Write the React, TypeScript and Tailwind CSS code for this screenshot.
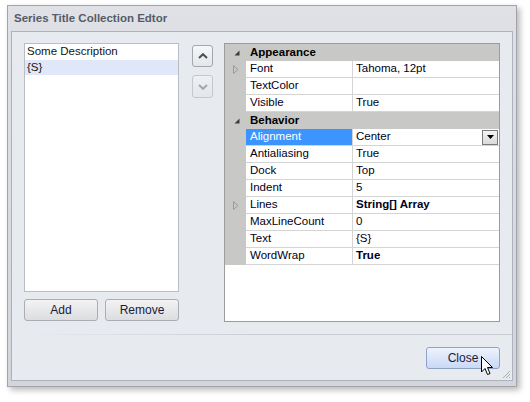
import React from 'react';

type Row =
    | { kind: 'cat'; label: string }
    | { kind: 'prop'; name: string; value: string; bold?: boolean; expand?: boolean; selected?: boolean };

const rows: Row[] = [
    { kind: 'cat', label: 'Appearance' },
    { kind: 'prop', name: 'Font', value: 'Tahoma, 12pt', expand: true },
    { kind: 'prop', name: 'TextColor', value: '' },
    { kind: 'prop', name: 'Visible', value: 'True' },
    { kind: 'cat', label: 'Behavior' },
    { kind: 'prop', name: 'Alignment', value: 'Center', selected: true },
    { kind: 'prop', name: 'Antialiasing', value: 'True' },
    { kind: 'prop', name: 'Dock', value: 'Top' },
    { kind: 'prop', name: 'Indent', value: '5' },
    { kind: 'prop', name: 'Lines', value: 'String[] Array', bold: true, expand: true },
    { kind: 'prop', name: 'MaxLineCount', value: '0' },
    { kind: 'prop', name: 'Text', value: '{S}' },
    { kind: 'prop', name: 'WordWrap', value: 'True', bold: true },
];

const Collapse = () => (
    <svg width="6" height="6" viewBox="0 0 6 6">
        <polygon points="5.5,0.5 5.5,5.5 0.5,5.5" fill="#3c3c3c" />
    </svg>
);

const Expand = () => (
    <svg width="6" height="9" viewBox="0 0 6 9">
        <polygon points="0.5,0.5 5,4.5 0.5,8.5" fill="none" stroke="#9a9a9a" strokeWidth="1" />
    </svg>
);

const Chevron = ({ up, color }: { up?: boolean; color: string }) => (
    <svg width="10" height="6" viewBox="0 0 10 6">
        <polyline
            points={up ? '1,5 5,1.2 9,5' : '1,1 5,4.8 9,1'}
            fill="none"
            stroke={color}
            strokeWidth="2"
        />
    </svg>
);

const Cursor = () => (
    <svg width="13" height="20" viewBox="0 0 13 20" className="absolute left-[481px] top-[356px]">
        <path
            d="M0.5,0.5 L0.5,16 L4,12.5 L6.5,18.5 L9,17.5 L6.5,11.5 L11.5,11.5 Z"
            fill="#ffffff"
            stroke="#000000"
            strokeWidth="1"
            strokeLinejoin="round"
        />
    </svg>
);

const PropertyGrid = () => (
    <div className="w-[276px] h-[279px] border border-[#9c9c9c] bg-white flex flex-col">
        {rows.map((r, i) =>
            r.kind === 'cat' ? (
                <div key={i} className="h-[17px] shrink-0 flex items-center bg-[#c8c9c6]">
                    <div className="w-[21px] flex items-center justify-center pl-[3px]">
                        <Collapse />
                    </div>
                    <span className="pl-[4px] font-bold text-black">{r.label}</span>
                </div>
            ) : (
                <div key={i} className="h-[17px] shrink-0 flex">
                    <div className="w-[21px] bg-[#c8c9c6] flex items-center justify-center pl-[1px]">
                        {r.expand && <Expand />}
                    </div>
                    <div
                        className={
                            r.selected
                                ? 'w-[107px] border-r border-b border-[#d4d4d4] bg-[#3c95fe] text-white pl-[4px] flex items-center'
                                : 'w-[107px] border-r border-b border-[#d4d4d4] text-[#000020] pl-[4px] flex items-center'
                        }
                    >
                        {r.name}
                    </div>
                    <div className="flex-1 border-b border-[#d4d4d4] pl-[3px] flex items-center justify-between text-[#000020]">
                        <span className={r.bold ? 'font-bold' : ''}>{r.value}</span>
                        {r.selected && (
                            <div className="w-[16px] h-[15px] mr-[1px] border border-[#7a7a7a] bg-gradient-to-b from-[#f4f4f4] to-[#dadada] flex items-center justify-center">
                                <svg width="7" height="4" viewBox="0 0 7 4">
                                    <polygon points="0,0 7,0 3.5,4" fill="#000" />
                                </svg>
                            </div>
                        )}
                    </div>
                </div>
            )
        )}
    </div>
);

const App = () => {
    return (
        <div
            className="relative w-[530px] h-[402px] bg-white pt-[5px] pl-[7px] text-[11.5px] leading-none"
            style={{ fontFamily: '"Liberation Sans", Arial, sans-serif' }}
        >
            <div className="w-[510px] h-[382px] border border-[#a2a4aa] bg-gradient-to-b from-[#dfe1e6] to-[#d2d5db] shadow-[3px_3px_6px_rgba(0,0,0,0.28)] flex flex-col px-[3px] pb-[5px]">
                <div className="h-[25px] flex items-center pl-[3px] font-bold text-[#565b66] text-[11.5px]">
                    Series Title Collection Edtor
                </div>
                <div className="relative flex-1 border border-[#aeb2ba] bg-[#e7ebef] flex flex-col">
                    <div className="flex pl-[12px] pt-[11px]">
                        <div className="w-[155px] flex flex-col">
                            <div className="h-[249px] border border-[#b9bec6] bg-white flex flex-col">
                                <div className="h-[16px] flex items-center pl-[2px] text-[#141414]">Some Description</div>
                                <div className="h-[15px] flex items-center pl-[2px] bg-[#dfe7f8] text-[#141414]">{'{S}'}</div>
                            </div>
                            <div className="flex gap-[7px] mt-[7px]">
                                <button className="w-[74px] h-[22px] rounded-[3px] border border-[#a9adb4] bg-gradient-to-b from-[#f3f3f4] to-[#dcdde0] text-[#1a1a40] text-[12px]">
                                    Add
                                </button>
                                <button className="w-[74px] h-[22px] rounded-[3px] border border-[#a9adb4] bg-gradient-to-b from-[#f3f3f4] to-[#dcdde0] text-[#1a1a40] text-[12px]">
                                    Remove
                                </button>
                            </div>
                        </div>
                        <div className="flex flex-col gap-[8px] ml-[13px] mt-[2px]">
                            <div className="w-[21px] h-[22px] rounded-[3px] border border-[#a3a7ae] bg-gradient-to-b from-[#f6f7f8] to-[#e4e6e9] flex items-center justify-center">
                                <Chevron up color="#4a4d52" />
                            </div>
                            <div className="w-[21px] h-[23px] rounded-[3px] border border-[#c4c8ce] bg-gradient-to-b from-[#eef0f2] to-[#e4e7ea] flex items-center justify-center">
                                <Chevron color="#a4a8ae" />
                            </div>
                        </div>
                        <div className="ml-[11px]">
                            <PropertyGrid />
                        </div>
                    </div>
                    <div className="mt-[12px] ml-[12px] h-px bg-gradient-to-r from-[#e7ebef] via-[#c9cdd3] to-[#c9cdd3]" />
                    <div className="flex justify-end pr-[12px] mt-[12px]">
                        <button className="w-[74px] h-[22px] rounded-[3px] border border-[#8fa2c4] bg-gradient-to-b from-[#eef3fd] to-[#c9d9f6] text-[#1a1a40] text-[12px]">
                            Close
                        </button>
                    </div>
                    <svg width="9" height="9" viewBox="0 0 9 9" className="absolute right-[1px] bottom-[1px]">
                        <line x1="8" y1="1" x2="1" y2="8" stroke="#a9adb3" />
                        <line x1="8" y1="4" x2="4" y2="8" stroke="#a9adb3" />
                        <line x1="8" y1="7" x2="7" y2="8" stroke="#a9adb3" />
                    </svg>
                </div>
            </div>
            <Cursor />
        </div>
    );
};

export default App;
